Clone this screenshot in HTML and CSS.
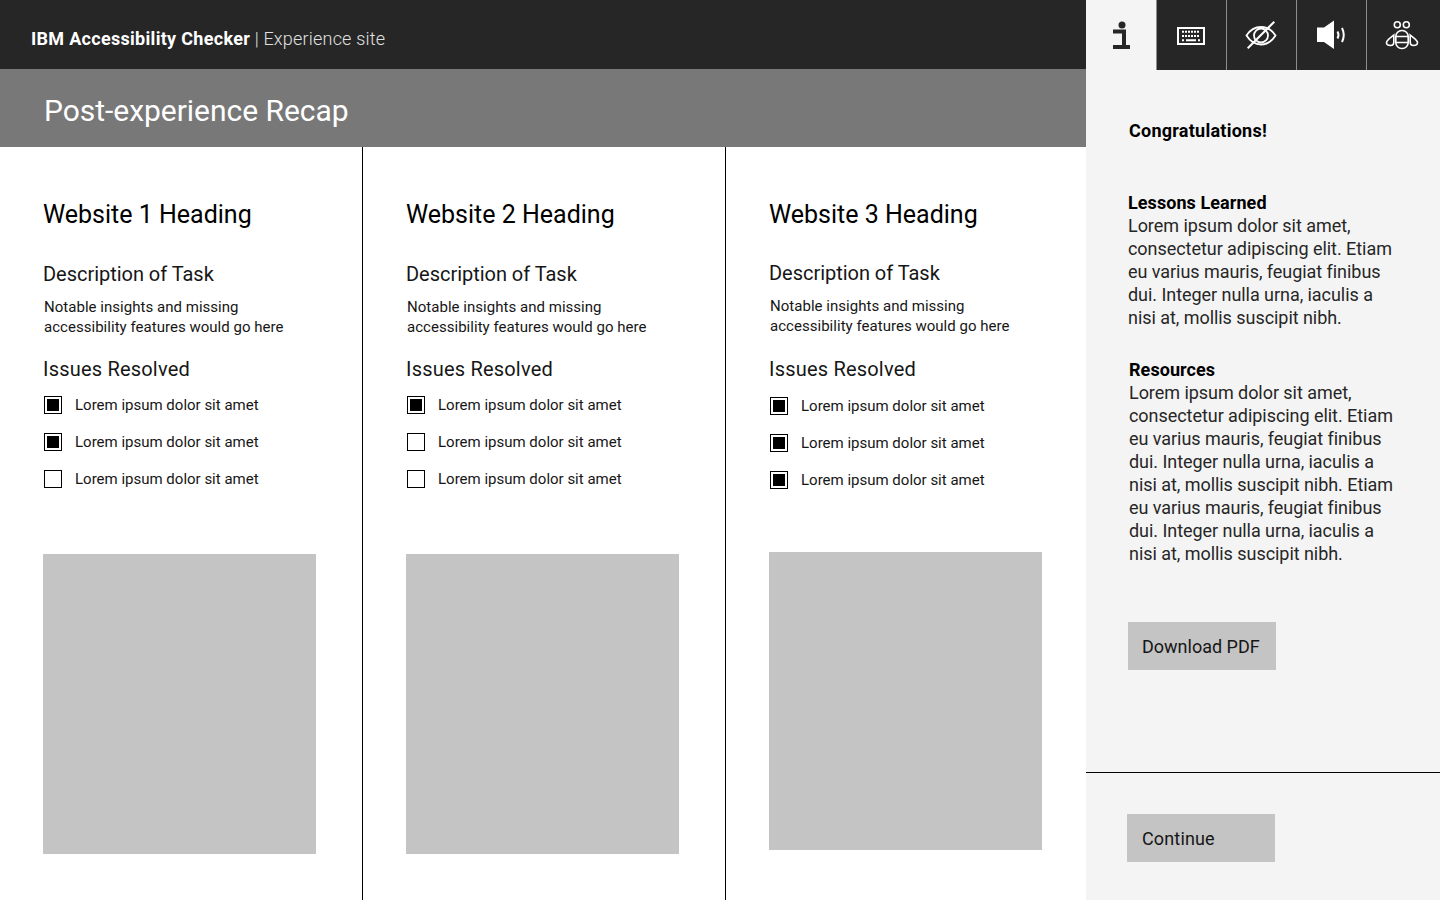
FILE: index.html
```html
<!DOCTYPE html>
<html lang="en">
<head>
<meta charset="utf-8">
<title>Post-experience Recap</title>
<link rel="stylesheet" href="styles.css">
</head>
<body>
<div class="app">
  <main class="main">
    <header class="topbar"><span class="brand"><b>IBM Accessibility Checker</b> <span class="pipe">|</span> Experience site</span></header>
    <div class="band"><h1>Post-experience Recap</h1></div>
    <div class="cols">
      <section class="col">
        <h2>Website 1 Heading</h2>
        <h3>Description of Task</h3>
        <p class="note">Notable insights and missing<br>accessibility features would go here</p>
        <h3 class="issues">Issues Resolved</h3>
        <ul class="checks">
          <li><span class="box on"></span>Lorem ipsum dolor sit amet</li>
          <li><span class="box on"></span>Lorem ipsum dolor sit amet</li>
          <li><span class="box"></span>Lorem ipsum dolor sit amet</li>
        </ul>
        <div class="shot"></div>
      </section>
      <section class="col">
        <h2>Website 2 Heading</h2>
        <h3>Description of Task</h3>
        <p class="note">Notable insights and missing<br>accessibility features would go here</p>
        <h3 class="issues">Issues Resolved</h3>
        <ul class="checks">
          <li><span class="box on"></span>Lorem ipsum dolor sit amet</li>
          <li><span class="box"></span>Lorem ipsum dolor sit amet</li>
          <li><span class="box"></span>Lorem ipsum dolor sit amet</li>
        </ul>
        <div class="shot"></div>
      </section>
      <section class="col col3">
        <h2>Website 3 Heading</h2>
        <h3>Description of Task</h3>
        <p class="note">Notable insights and missing<br>accessibility features would go here</p>
        <h3 class="issues">Issues Resolved</h3>
        <ul class="checks">
          <li><span class="box on"></span>Lorem ipsum dolor sit amet</li>
          <li><span class="box on"></span>Lorem ipsum dolor sit amet</li>
          <li><span class="box on"></span>Lorem ipsum dolor sit amet</li>
        </ul>
        <div class="shot"></div>
      </section>
    </div>
  </main>
  <aside class="side">
    <nav class="tabs">
      <div class="tab active">
        <svg width="70" height="70" viewBox="0 0 70 70"><circle cx="36" cy="25" r="3.500" fill="#262626"/><path d="M27 29.500h13V45h4v4H27v-4h9V33.500h-9z" fill="#262626"/></svg>
      </div>
      <div class="tab">
        <svg width="70" height="70" viewBox="0 0 70 70" fill="none" stroke="#fff"><rect x="22" y="28" width="26" height="16" stroke-width="2"/><path d="M26 31.800h18M26 36h18" stroke-width="2" stroke-dasharray="2 1"/><path d="M26 40.200h2M30 40.200h10M42 40.200h2" stroke-width="2"/></svg>
      </div>
      <div class="tab">
        <svg width="70" height="70" viewBox="0 0 70 70" fill="none" stroke="#fff" stroke-width="1.800"><path d="M20.500 35.500C24 30 29 27 35 27s11 3 14.500 8.500C46 41 41 44.500 35 44.500S24 41 20.500 35.500z"/><circle cx="35" cy="35.500" r="7"/><path d="M21.700 48.300L48.300 21.700" stroke-width="2"/></svg>
      </div>
      <div class="tab">
        <svg width="70" height="70" viewBox="0 0 70 70" fill="none"><path d="M21 27.500h7l10-7V49l-10-7h-7z" fill="#fff"/><path d="M41.500 31.500q2 3.500 0 7M46 28q3.500 7 0 14" stroke="#fff" stroke-width="2"/></svg>
      </div>
      <div class="tab tab-last">
        <svg width="70" height="70" viewBox="0 0 70 70" fill="none" stroke="#fff" stroke-width="1.600"><circle cx="31.300" cy="24.700" r="3"/><circle cx="40.300" cy="24.700" r="3"/><rect x="29.800" y="30.500" width="12.400" height="18" rx="6"/><path d="M29.800 36.500h12.400M29.800 42.500h12.400"/><path d="M27.800 35C25 37.500 20.500 40 20.500 42.500 20.500 44.500 22.500 45.500 24.500 45.500 26.800 45.500 27.800 44 27.800 42zM44.200 35C47 37.500 51.500 40 51.500 42.500 51.500 44.500 49.500 45.500 47.500 45.500 45.200 45.500 44.200 44 44.200 42z"/></svg>
      </div>
    </nav>
    <div class="side-body">
      <h4 class="congrats">Congratulations!</h4>
      <div class="block lessons">
        <strong>Lessons Learned</strong>
        <p>Lorem ipsum dolor sit amet,<br>consectetur adipiscing elit. Etiam<br>eu varius mauris, feugiat finibus<br>dui. Integer nulla urna, iaculis a<br>nisi at, mollis suscipit nibh.</p>
      </div>
      <div class="block resources">
        <strong>Resources</strong>
        <p>Lorem ipsum dolor sit amet,<br>consectetur adipiscing elit. Etiam<br>eu varius mauris, feugiat finibus<br>dui. Integer nulla urna, iaculis a<br>nisi at, mollis suscipit nibh. Etiam<br>eu varius mauris, feugiat finibus<br>dui. Integer nulla urna, iaculis a<br>nisi at, mollis suscipit nibh.</p>
      </div>
      <button class="btn download">Download PDF</button>
    </div>
    <div class="side-foot"><button class="btn continue">Continue</button></div>
  </aside>
</div>
</body>
</html>
```
FILE: styles.css
```css
* { box-sizing: border-box; }
html, body { margin: 0; height: 100%; overflow: hidden; }
body { font-family: "Roboto", "Liberation Sans", sans-serif; color: #161616; background: #fff; }
.app { display: grid; grid-template-columns: 1086px 354px; height: 900px; }
.main { display: flex; flex-direction: column; min-width: 0; }
.topbar { height: 69px; background: #262626; color: #e0e0e0; padding: 8px 0 0 31px; display: flex; align-items: center; font-size: 18px; font-weight: 300; letter-spacing: 0.2px; }
.brand b { color: #fff; font-weight: 700; letter-spacing: 0.3px; }
.band { height: 78px; background: #787878; padding: 25px 0 0 44px; }
.band h1 { margin: 0; font-size: 30px; line-height: 34px; font-weight: 400; color: #fff; letter-spacing: -0.03px; }
.cols { flex: 1; display: grid; grid-template-columns: 363px 363px 360px; }
.col { border-right: 1px solid #000; padding: 53px 0 0 43px; }
.col3 { border-right: 0; }
h2 { margin: 0; font-size: 25px; line-height: 30px; font-weight: 400; color: #000; }
h3 { margin: 0; font-size: 20px; line-height: 24px; font-weight: 400; }
.col h3 { margin-top: 32px; letter-spacing: -0.03px; }
.col h3.issues { margin-top: 20px; letter-spacing: 0.2px; }
.note { margin: 11px 0 0 1px; font-size: 15px; line-height: 20px; letter-spacing: 0.03px; }
.checks { list-style: none; margin: 5px 0 0; padding: 0; }
.checks li { display: flex; align-items: center; height: 37px; font-size: 15px; }
.box { width: 18px; height: 18px; border: 1px solid #000; margin: 0 13px 0 1px; background: #fff; padding: 2px; }
.box.on::before { content: ""; display: block; width: 12px; height: 12px; background: #000; }
.shot { width: 273px; height: 300px; margin-top: 57px; background: #c4c4c4; }
.col3 h3 { margin-top: 31px; }
.col3 h3.issues { margin-top: 21px; }
.col3 .checks { margin-top: 6px; }
.col3 .shot { height: 298px; margin-top: 54px; }
.side { background: #f4f4f4; display: flex; flex-direction: column; }
.tabs { display: flex; height: 70px; }
.tab { width: 70px; background: #262626; box-shadow: inset 1px 0 0 #8d8d8d; }
.tab svg { display: block; }
.tab.active { background: #f4f4f4; box-shadow: none; }
.tab-last { width: 74px; }
.side-body { height: 703px; padding: 49px 0 0 43px; border-bottom: 1px solid #000; }
.congrats { margin: 0; font-size: 18px; line-height: 23px; font-weight: 700; letter-spacing: 0.25px; color: #000; }
.block strong { display: block; font-size: 18px; line-height: 23px; font-weight: 700; letter-spacing: 0.07px; color: #000; }
.block p { margin: 0; font-size: 18px; line-height: 23px; color: #262626; letter-spacing: -0.05px; }
.lessons { margin: 49px 0 0 -1px; }
.resources { margin-top: 29px; }
.btn { display: block; width: 148px; height: 48px; border: 0; background: #c4c4c4; font: inherit; font-size: 18px; text-align: left; padding: 0 14px; color: #161616; }
.download { margin: 57px 0 0 -1px; }
.continue { padding-left: 15px; letter-spacing: 0.15px; }
.side-foot { padding: 41px 0 0 41px; }
```
